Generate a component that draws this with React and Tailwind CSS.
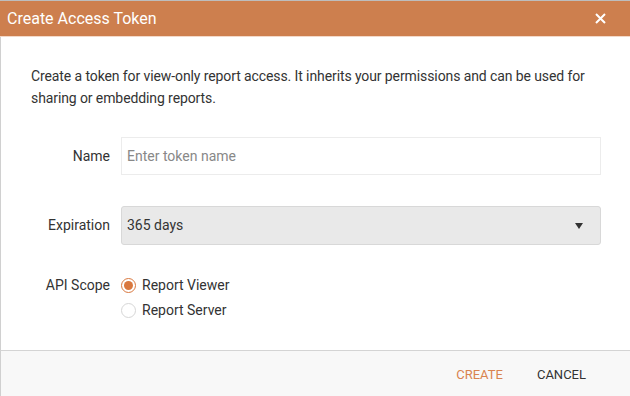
import React, { useState } from 'react';

function App() {
  const [scope, setScope] = useState('viewer');

  return (
    <div className="w-[630px] h-[396px] bg-white flex flex-col border-t border-[#bdbdbd] font-['Roboto',sans-serif] text-[14px] text-[#333]">
      {/* Header */}
      <div className="h-[36px] bg-[#cd7f4e] flex items-center justify-between pl-[7px] pr-[24px] border-b border-[#f3d9c9]">
        <h1 className="text-white text-[16px]">Create Access Token</h1>
        <button className="text-white">
          <svg width="11" height="11" viewBox="0 0 11 11">
            <path d="M1 1L10 10M10 1L1 10" stroke="white" strokeWidth="2" />
          </svg>
        </button>
      </div>

      {/* Body */}
      <div className="flex-1 border-l border-[#d0d0d0] pl-[30px] pr-[29px] pt-[28px]">
        <p className="leading-[22px] text-[#333] tracking-[-0.1px]">
          Create a token for view-only report access. It inherits your permissions and can be used for sharing or embedding reports.
        </p>

        <div className="mt-[28px] flex items-center">
          <label className="w-[90px] text-right pr-[11px]">Name</label>
          <input
            type="text"
            placeholder="Enter token name"
            className="flex-1 h-[38px] border border-[#ececec] px-[5px] outline-none placeholder:text-[#888] text-[14px]"
          />
        </div>

        <div className="mt-[31px] flex items-center">
          <label className="w-[90px] text-right pr-[11px]">Expiration</label>
          <div className="flex-1 h-[39px] bg-[#e9e9e9] border border-[#d8d8d8] rounded-[3px] flex items-center justify-between pl-[5px] pr-[17px]">
            <span>365 days</span>
            <svg width="8" height="6" viewBox="0 0 8 6">
              <path d="M0 0H8L4 6Z" fill="#333" />
            </svg>
          </div>
        </div>

        <div className="mt-[28px] flex">
          <label className="w-[90px] text-right pr-[11px] leading-[25px]">API Scope</label>
          <div className="flex flex-col">
            {[
              ['viewer', 'Report Viewer'],
              ['server', 'Report Server'],
            ].map(([key, text]) => (
              <div key={key} onClick={() => setScope(key)} className="flex items-center h-[25px] cursor-pointer">
                {scope === key ? (
                  <span className="w-[15px] h-[15px] rounded-full border border-[#d9783f] flex items-center justify-center">
                    <span className="w-[9px] h-[9px] rounded-full bg-[#d9783f]" />
                  </span>
                ) : (
                  <span className="w-[15px] h-[15px] rounded-full border border-[#d6d6d6]" />
                )}
                <span className="ml-[6px]">{text}</span>
              </div>
            ))}
          </div>
        </div>
      </div>

      {/* Footer */}
      <div className="h-[46px] bg-[#f8f8f8] border-t border-[#d4d4d4] border-l border-l-[#d0d0d0] flex items-center justify-end pr-[44px] pt-[3px] gap-[34px] text-[13px]">
        <button className="text-[#d9834f] uppercase">Create</button>
        <button className="text-[#333] uppercase">Cancel</button>
      </div>
    </div>
  );
}

export default App;
